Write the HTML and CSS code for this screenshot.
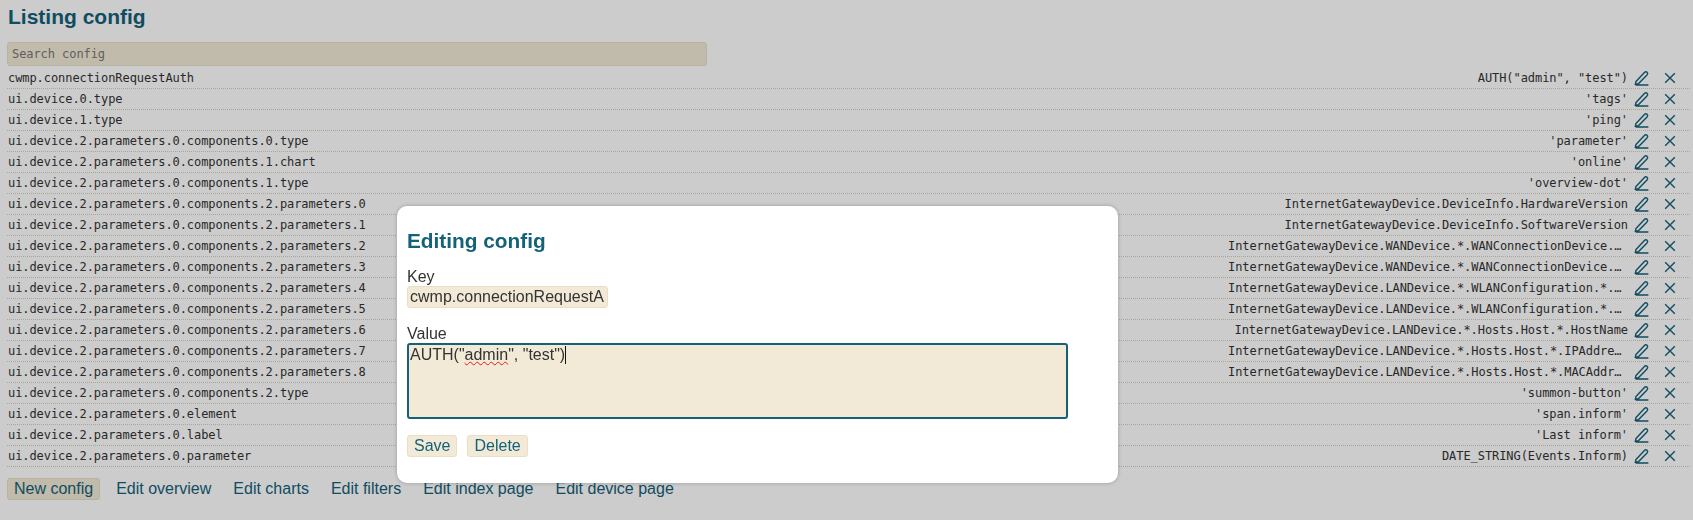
FILE: index.html
```html
<!DOCTYPE html>
<html lang="en">
<head>
    <meta charset="UTF-8">
    <title>Listing config</title>
    <link rel="stylesheet" href="styles.css">
</head>
<body>

    <svg class="sprite" width="0" height="0">
        <symbol id="icono-editar" viewBox="0 0 16 16">
            <path d="M2 11.4 L10.4 2.4 C11.2 1.6 12.4 1.6 13.1 2.3 C13.8 3 13.8 4.1 13 4.9 L4.6 13.6 L1.4 14.2 Z M1.6 15 H14.4" />
        </symbol>
        <symbol id="icono-borrar" viewBox="0 0 16 16">
            <path d="M3.2 3.2 L12.8 12.8 M12.8 3.2 L3.2 12.8" />
        </symbol>
    </svg>

    <h1 class="titulo">Listing config</h1>
    <input class="buscar" type="text" placeholder="Search config">

    <!-- Lista de config -->
    <div class="lista">
        <div class="fila"><span class="clave">cwmp.connectionRequestAuth</span><span class="valor">AUTH("admin", "test")</span><svg class="icono"><use href="#icono-editar"/></svg><svg class="icono"><use href="#icono-borrar"/></svg></div>
        <div class="fila"><span class="clave">ui.device.0.type</span><span class="valor">'tags'</span><svg class="icono"><use href="#icono-editar"/></svg><svg class="icono"><use href="#icono-borrar"/></svg></div>
        <div class="fila"><span class="clave">ui.device.1.type</span><span class="valor">'ping'</span><svg class="icono"><use href="#icono-editar"/></svg><svg class="icono"><use href="#icono-borrar"/></svg></div>
        <div class="fila"><span class="clave">ui.device.2.parameters.0.components.0.type</span><span class="valor">'parameter'</span><svg class="icono"><use href="#icono-editar"/></svg><svg class="icono"><use href="#icono-borrar"/></svg></div>
        <div class="fila"><span class="clave">ui.device.2.parameters.0.components.1.chart</span><span class="valor">'online'</span><svg class="icono"><use href="#icono-editar"/></svg><svg class="icono"><use href="#icono-borrar"/></svg></div>
        <div class="fila"><span class="clave">ui.device.2.parameters.0.components.1.type</span><span class="valor">'overview-dot'</span><svg class="icono"><use href="#icono-editar"/></svg><svg class="icono"><use href="#icono-borrar"/></svg></div>
        <div class="fila"><span class="clave">ui.device.2.parameters.0.components.2.parameters.0</span><span class="valor">InternetGatewayDevice.DeviceInfo.HardwareVersion</span><svg class="icono"><use href="#icono-editar"/></svg><svg class="icono"><use href="#icono-borrar"/></svg></div>
        <div class="fila"><span class="clave">ui.device.2.parameters.0.components.2.parameters.1</span><span class="valor">InternetGatewayDevice.DeviceInfo.SoftwareVersion</span><svg class="icono"><use href="#icono-editar"/></svg><svg class="icono"><use href="#icono-borrar"/></svg></div>
        <div class="fila"><span class="clave">ui.device.2.parameters.0.components.2.parameters.2</span><span class="valor">InternetGatewayDevice.WANDevice.*.WANConnectionDevice.*.WANIPConnection.*.ExternalIPAddress</span><svg class="icono"><use href="#icono-editar"/></svg><svg class="icono"><use href="#icono-borrar"/></svg></div>
        <div class="fila"><span class="clave">ui.device.2.parameters.0.components.2.parameters.3</span><span class="valor">InternetGatewayDevice.WANDevice.*.WANConnectionDevice.*.WANPPPConnection.*.Username</span><svg class="icono"><use href="#icono-editar"/></svg><svg class="icono"><use href="#icono-borrar"/></svg></div>
        <div class="fila"><span class="clave">ui.device.2.parameters.0.components.2.parameters.4</span><span class="valor">InternetGatewayDevice.LANDevice.*.WLANConfiguration.*.SSID</span><svg class="icono"><use href="#icono-editar"/></svg><svg class="icono"><use href="#icono-borrar"/></svg></div>
        <div class="fila"><span class="clave">ui.device.2.parameters.0.components.2.parameters.5</span><span class="valor">InternetGatewayDevice.LANDevice.*.WLANConfiguration.*.KeyPassphrase</span><svg class="icono"><use href="#icono-editar"/></svg><svg class="icono"><use href="#icono-borrar"/></svg></div>
        <div class="fila"><span class="clave">ui.device.2.parameters.0.components.2.parameters.6</span><span class="valor">InternetGatewayDevice.LANDevice.*.Hosts.Host.*.HostName</span><svg class="icono"><use href="#icono-editar"/></svg><svg class="icono"><use href="#icono-borrar"/></svg></div>
        <div class="fila"><span class="clave">ui.device.2.parameters.0.components.2.parameters.7</span><span class="valor">InternetGatewayDevice.LANDevice.*.Hosts.Host.*.IPAddress</span><svg class="icono"><use href="#icono-editar"/></svg><svg class="icono"><use href="#icono-borrar"/></svg></div>
        <div class="fila"><span class="clave">ui.device.2.parameters.0.components.2.parameters.8</span><span class="valor">InternetGatewayDevice.LANDevice.*.Hosts.Host.*.MACAddress</span><svg class="icono"><use href="#icono-editar"/></svg><svg class="icono"><use href="#icono-borrar"/></svg></div>
        <div class="fila"><span class="clave">ui.device.2.parameters.0.components.2.type</span><span class="valor">'summon-button'</span><svg class="icono"><use href="#icono-editar"/></svg><svg class="icono"><use href="#icono-borrar"/></svg></div>
        <div class="fila"><span class="clave">ui.device.2.parameters.0.element</span><span class="valor">'span.inform'</span><svg class="icono"><use href="#icono-editar"/></svg><svg class="icono"><use href="#icono-borrar"/></svg></div>
        <div class="fila"><span class="clave">ui.device.2.parameters.0.label</span><span class="valor">'Last inform'</span><svg class="icono"><use href="#icono-editar"/></svg><svg class="icono"><use href="#icono-borrar"/></svg></div>
        <div class="fila"><span class="clave">ui.device.2.parameters.0.parameter</span><span class="valor">DATE_STRING(Events.Inform)</span><svg class="icono"><use href="#icono-editar"/></svg><svg class="icono"><use href="#icono-borrar"/></svg></div>
    </div>

    <!-- Acciones -->
    <div class="acciones">
        <button class="boton">New config</button>
        <a href="#overview">Edit overview</a>
        <a href="#charts">Edit charts</a>
        <a href="#filters">Edit filters</a>
        <a href="#index">Edit index page</a>
        <a href="#device">Edit device page</a>
    </div>

    <!-- Modal -->
    <div class="fondo-modal">
        <div class="modal">
            <h2>Editing config</h2>
            <label class="campo">
                <span>Key</span>
                <input class="entrada" type="text" value="cwmp.connectionRequestAuth">
            </label>
            <div class="campo">
                <span>Value</span>
                <div class="area">AUTH("<span class="error">admin</span>", "test")<span class="cursor"></span></div>
            </div>
            <div class="botones">
                <button class="boton">Save</button>
                <button class="boton">Delete</button>
            </div>
        </div>
    </div>

</body>
</html>
```

FILE: styles.css
```css
body {
    margin: 0;
    padding: 0 3px 0 7px;
    font-family: "Liberation Sans", Arial, sans-serif;
    font-size: 16px;
    color: #333;
    background-color: #fff;
    height: 520px;
    box-sizing: border-box;
    overflow: hidden;
}
.sprite {
    position: absolute;
}
.titulo {
    margin: 0;
    padding: 4px 0 0 1px;
    height: 42px;
    box-sizing: border-box;
    font-size: 21px;
    line-height: 26px;
    color: #14617a;
}
.buscar {
    display: block;
    width: 700px;
    height: 24px;
    box-sizing: border-box;
    margin-bottom: 2px;
    padding: 0 4px;
    background-color: #f2ead6;
    border: 1px solid #e8dfc6;
    border-radius: 3px;
    font-family: "DejaVu Sans Mono", monospace;
    font-size: 12px;
    letter-spacing: -0.07px;
}
.buscar::placeholder {
    color: #777;
}
.fila {
    display: flex;
    align-items: center;
    height: 21px;
    box-sizing: border-box;
    border-bottom: 1px dotted #d5d0bc;
    font-family: "DejaVu Sans Mono", monospace;
    font-size: 12px;
    letter-spacing: -0.07px;
    color: #333;
}
.clave {
    flex: 1;
    padding-left: 1px;
    white-space: nowrap;
}
.valor {
    max-width: 400px;
    overflow: hidden;
    white-space: nowrap;
    text-overflow: ellipsis;
    margin-right: 6px;
}
.icono {
    width: 16px;
    height: 16px;
    margin-right: 12px;
    fill: none;
    stroke: #14617a;
    stroke-width: 1.4;
}
.acciones {
    display: flex;
    align-items: center;
    margin-top: 11px;
    gap: 22px;
}
.acciones a {
    color: #14617a;
    text-decoration: none;
}
.boton {
    height: 22px;
    padding: 0 6px;
    font-family: inherit;
    font-size: 16px;
    color: #14617a;
    background-color: #f2ead6;
    border: 1px solid #e8dfc6;
    border-radius: 3px;
}
.acciones .boton {
    margin-right: -6px;
}
.fondo-modal {
    position: fixed;
    left: 0;
    top: 0;
    width: 100%;
    height: 100%;
    background-color: rgba(0,0,0,0.2);
}
.modal {
    position: absolute;
    left: 397px;
    top: 206px;
    width: 721px;
    height: 277px;
    box-sizing: border-box;
    padding: 23px 10px 0;
    background-color: #fff;
    border-radius: 10px;
    box-shadow: 0 0 4px rgba(0,0,0,0.25);
}
.modal h2 {
    margin: 0 0 14px;
    font-size: 20.8px;
    line-height: 24px;
    color: #14617a;
}
.campo {
    display: block;
    margin-bottom: 16px;
    line-height: 19px;
}
.campo > span {
    display: block;
}
.entrada {
    display: block;
    width: 201px;
    height: 22px;
    box-sizing: border-box;
    padding: 0 2px;
    font-family: inherit;
    font-size: 16px;
    color: #333;
    background-color: #f2ead6;
    border: 1px solid #e8dfc6;
    border-radius: 3px;
}
.area {
    width: 661px;
    height: 76px;
    box-sizing: border-box;
    padding: 1px 1px 0;
    line-height: 18px;
    background-color: #f2ead6;
    border: 2px solid #14617a;
    border-radius: 3px;
}
.error {
    text-decoration: underline wavy #e0201c 1px;
}
.cursor {
    display: inline-block;
    width: 1px;
    height: 18px;
    vertical-align: top;
    background-color: #111;
}
.botones {
    display: flex;
    gap: 10px;
    margin-top: 15px;
}
```
